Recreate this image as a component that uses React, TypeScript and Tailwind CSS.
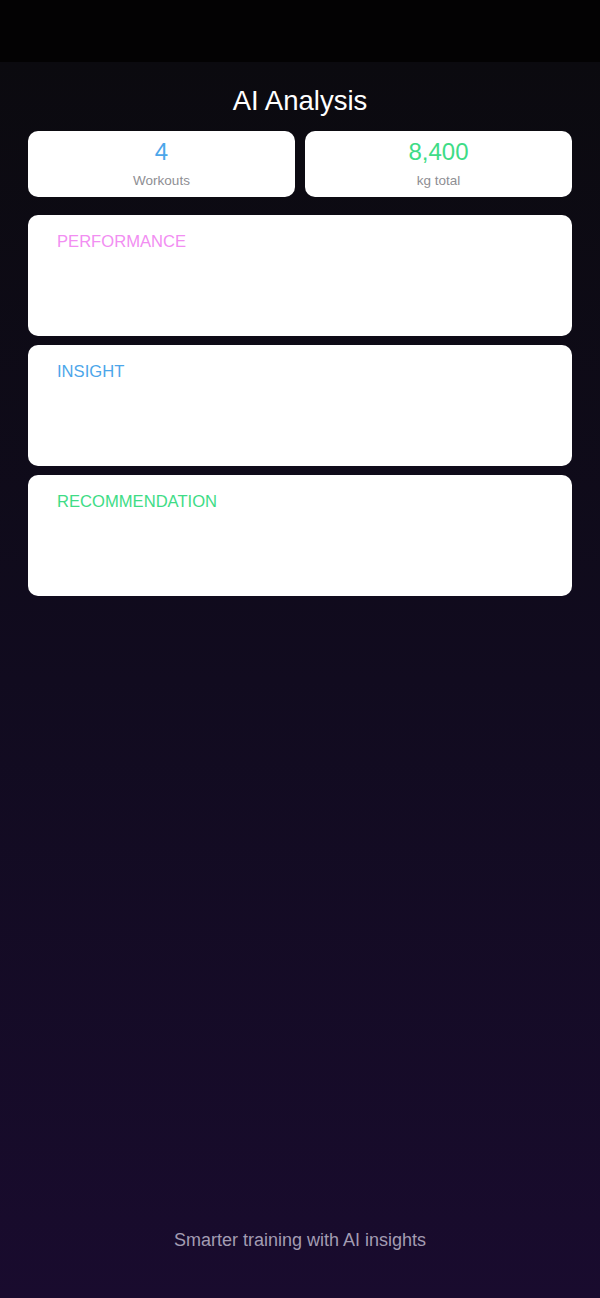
const stats = [
  { value: "4", label: "Workouts", color: "text-[#4ca6ea]" },
  { value: "8,400", label: "kg total", color: "text-[#3edc86]" },
];

const sections = [
  { title: "PERFORMANCE", color: "text-[#f28ef2]" },
  { title: "INSIGHT", color: "text-[#4ca6ea]" },
  { title: "RECOMMENDATION", color: "text-[#3edc86]" },
];

export default function App() {
  return (
    <div
      className="min-h-[1298px] flex flex-col"
      style={{ fontFamily: '"Liberation Sans", Arial, sans-serif' }}
    >
      {/* Status bar area */}
      <div className="h-[62px] bg-[#030203] shrink-0" />

      <main className="flex-1 flex flex-col bg-gradient-to-b from-[#0b0a0f] via-[#110b1f] to-[#190b2e] px-[28px]">
        <h1 className="text-center text-white text-[27.5px] leading-[30px] pt-[24px]">AI Analysis</h1>

        {/* Stats */}
        <div className="grid grid-cols-2 gap-[10px] mt-[15px]">
          {stats.map((s) => (
            <div key={s.label} className="bg-white rounded-[10px] h-[66px] flex flex-col items-center pt-[7px]">
              <span className={`${s.color} text-[24px] leading-[28px]`}>{s.value}</span>
              <span className="text-[#8e8e93] text-[13.5px] leading-[16px] mt-[7px]">{s.label}</span>
            </div>
          ))}
        </div>

        {/* Analysis cards */}
        <div className="flex flex-col gap-[9px] mt-[18px]">
          {sections.map((s) => (
            <div key={s.title} className="bg-white rounded-[10px] h-[121px] px-[29px] pt-[17px]">
              <p className={`${s.color} text-[16.6px] leading-[20px]`}>{s.title}</p>
            </div>
          ))}
        </div>

        <div className="flex-1" />

        <p className="text-center text-[#a39cb2] text-[18px] leading-[20px] pb-[48px]">
          Smarter training with AI insights
        </p>
      </main>
    </div>
  );
}
